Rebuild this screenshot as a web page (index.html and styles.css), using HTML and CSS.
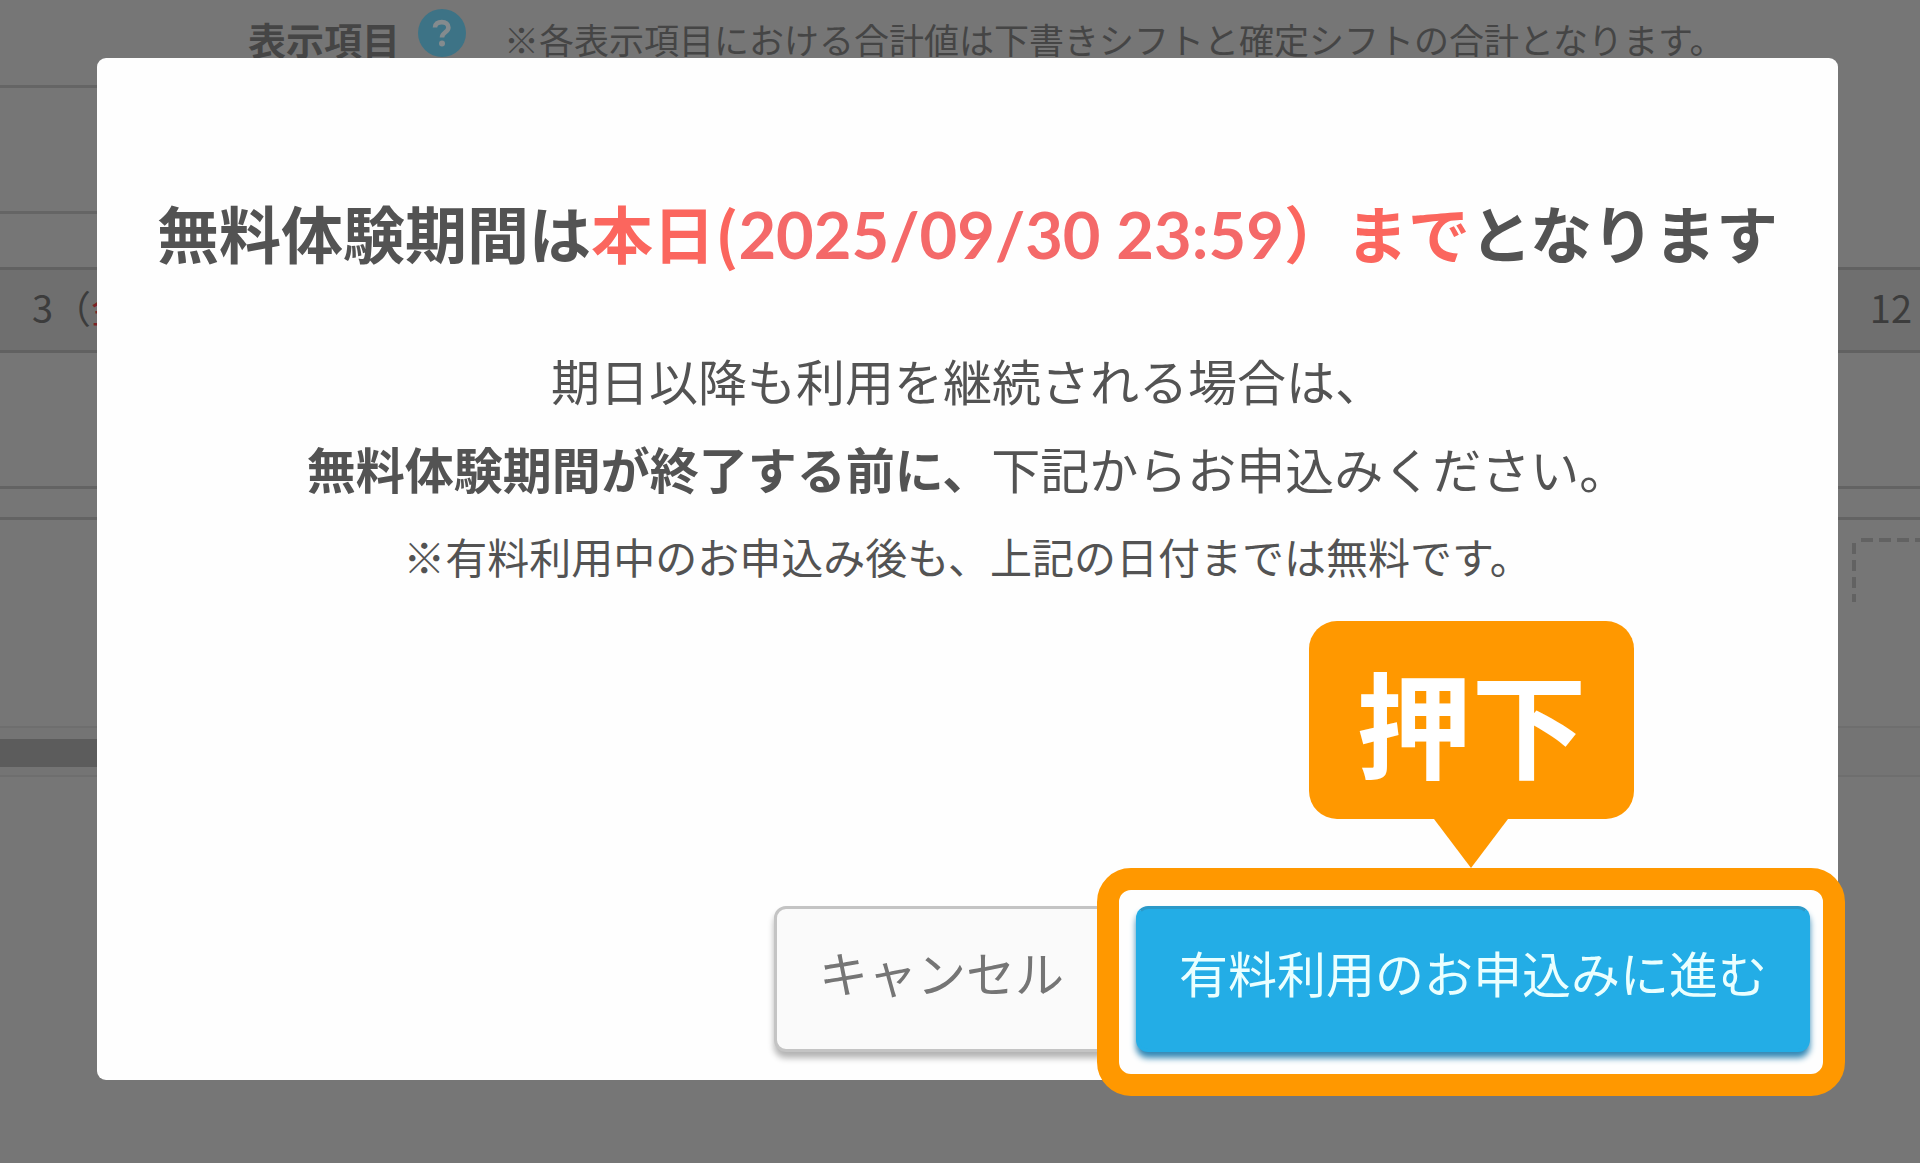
FILE: index.html
```html
<!DOCTYPE html>
<html lang="ja">
<head>
<meta charset="utf-8">
<meta name="viewport" content="width=device-width, initial-scale=1">
<title>無料体験期間のお知らせ</title>
<link rel="stylesheet" href="styles.css">
</head>
<body>
<main class="shift">
  <header class="toolbar">
    <span class="toolbar-label">表示項目</span>
    <svg class="help" viewBox="0 0 48 48" role="img" aria-label="ヘルプ">
      <circle cx="24" cy="24" r="24" fill="#3d7386"/>
      <path d="M17 18.500c0-3.600 2.800-5.400 6.800-5.400s6.600 2 6.600 5.400c0 5-6.400 4.600-6.400 10" fill="none" stroke="#848b8e" stroke-width="4.600"/>
      <circle cx="24" cy="34.500" r="3" fill="#848b8e"/>
    </svg>
    <span class="toolbar-note">※各表示項目における合計値は下書きシフトと確定シフトの合計となります。</span>
  </header>
  <div class="summary"></div>
  <div class="spacer"></div>
  <table class="calendar">
    <thead>
      <tr><th scope="col">3（<span class="holiday">金</span></th><th scope="col" class="day-last">12</th></tr>
    </thead>
    <tbody>
      <tr class="row-total"><td></td><td></td></tr>
      <tr class="row-thin"><td></td><td></td></tr>
      <tr class="row-shift"><td></td><td class="slot-cell"><div class="slot"></div></td></tr>
    </tbody>
  </table>
  <div class="scroll-track"><div class="scroll-thumb"></div></div>
</main>

<div class="overlay">
  <section class="modal" role="dialog" aria-modal="true" aria-labelledby="modal-title">
    <h1 class="modal-title" id="modal-title">無料体験期間は<span class="deadline">本日(<span class="date">2025/09/30 23:59</span>）まで</span>となります</h1>
    <div class="modal-body">
      <p>期日以降も利用を継続される場合は、</p>
      <p><strong>無料体験期間が終了する前に、</strong>下記からお申込みください。</p>
      <p class="note">※有料利用中のお申込み後も、上記の日付までは無料です。</p>
    </div>
    <div class="actions">
      <button type="button" class="btn btn-cancel">キャンセル</button>
      <div class="guide">
        <button type="button" class="btn btn-primary">有料利用のお申込みに進む</button>
        <div class="guide-frame"></div>
        <div class="callout">押下</div>
      </div>
    </div>
  </section>
</div>
</body>
</html>
```

FILE: styles.css
```css
* {
  box-sizing: border-box;
}

body {
  margin: 0;
  min-height: 100vh;
  background: #767676;
  color: #535353;
  font-family: "Noto Sans CJK JP", sans-serif;
  overflow-x: hidden;
}

/* Shift table behind the dialog */
.shift {
  position: absolute;
  inset: 0;
  overflow: hidden;
}

.toolbar {
  display: flex;
  align-items: center;
  height: 88px;
  width: 90%;
  padding: 0 0 8px 248px;
  border-bottom: 3px solid #656565;
  color: #454545;
  white-space: nowrap;
}

.toolbar-label {
  font-size: 38px;
  font-weight: 700;
}

.help {
  flex: none;
  width: 48px;
  height: 48px;
  margin: 0 38px 12px 18px;
}

.toolbar-note {
  font-size: 35px;
}

.summary {
  height: 126px;
  width: 90%;
  border-bottom: 3px solid #656565;
}

.spacer {
  height: 53px;
}

.calendar {
  width: 100%;
  border-collapse: separate;
  border-spacing: 0;
  table-layout: fixed;
}

.calendar th {
  height: 86px;
  padding: 0 8px 6px 32px;
  border-top: 3px solid #616161;
  border-bottom: 3px solid #616161;
  background: #6f6f6f;
  color: #3c3c3c;
  font-size: 38px;
  font-weight: 400;
  text-align: left;
  line-height: 56px;
}

.calendar .day-last {
  text-align: right;
}

.holiday {
  color: #7d2226;
}

.calendar td {
  padding: 0;
  vertical-align: top;
}

.row-total td {
  height: 136px;
  border-bottom: 3px solid #636363;
}

.row-thin td {
  height: 31px;
  border-bottom: 3px solid #636363;
}

.row-shift td {
  height: 208px;
  border-bottom: 2px solid #6e6e6e;
}

.calendar .slot-cell {
  padding-top: 18px;
}

/* Empty shift slot with a long-dash outline */
.slot {
  width: 68px;
  height: 64px;
  margin-left: auto;
  background:
    repeating-linear-gradient(90deg, #626262 0 12px, transparent 12px 18px) 9px 0 / 100% 4px no-repeat,
    repeating-linear-gradient(180deg, #626262 0 11px, transparent 11px 17px) 0 5px / 4px 100% no-repeat;
}

.scroll-track {
  height: 49px;
  padding: 11px 0;
  border-bottom: 2px solid #6e6e6e;
  background: #747474;
}

.scroll-thumb {
  width: 50%;
  height: 28px;
  background: #5c5c5c;
}

/* Dialog */
.overlay {
  position: relative;
  padding: 58px 82px 80px 97px;
}

.modal {
  padding: 130px 28px 28px;
  border-radius: 9px;
  background: #fefefe;
  text-align: center;
}

.modal-title {
  margin: 0;
  font-size: 62px;
  font-weight: 700;
  line-height: 88px;
  white-space: nowrap;
}

.deadline {
  color: #fb665e;
}

.date {
  color: #f46969;
  font-family: Lato, sans-serif;
  font-size: 65px;
  line-height: 1;
}

.modal-body {
  margin: 60px 0 306px;
  font-size: 49px;
  line-height: 88px;
}

.modal-body p {
  margin: 0;
}

.modal-body .note {
  font-size: 42px;
}

.actions {
  display: flex;
  justify-content: flex-end;
  gap: 27px;
}

.btn {
  height: 146px;
  padding: 0 40px 15px;
  border: 3px solid #c4c4c4;
  border-radius: 12px;
  background: #fafafa;
  box-shadow: 0 6px 6px #b4b4b4;
  color: #757575;
  font: 400 49px "Noto Sans CJK JP", sans-serif;
  white-space: nowrap;
}

.btn-cancel {
  padding-right: 42px;
  padding-left: 42px;
}

.btn-primary {
  border-color: #2b99c8 #23ade6 #23ade6;
  background: #23ade6;
  box-shadow: 0 6px 6px #3388b5;
  color: #eaffff;
}

/* Highlight and callout over the primary button */
.guide {
  position: relative;
}

.guide-frame {
  position: absolute;
  inset: -38px -35px -44px -39px;
  border: 22px solid #ff9800;
  border-radius: 34px;
  pointer-events: none;
}

.callout {
  position: absolute;
  bottom: 233px;
  left: 50%;
  width: 325px;
  margin-left: -164px;
  border-radius: 28px;
  background: #ff9800;
  color: #fff;
  font-size: 115px;
  font-weight: 700;
  line-height: 198px;
}

.callout::after {
  content: "";
  position: absolute;
  top: 100%;
  left: 50%;
  margin-left: -37px;
  border: solid transparent;
  border-width: 49px 37px 0;
  border-top-color: #ff9800;
}
```
